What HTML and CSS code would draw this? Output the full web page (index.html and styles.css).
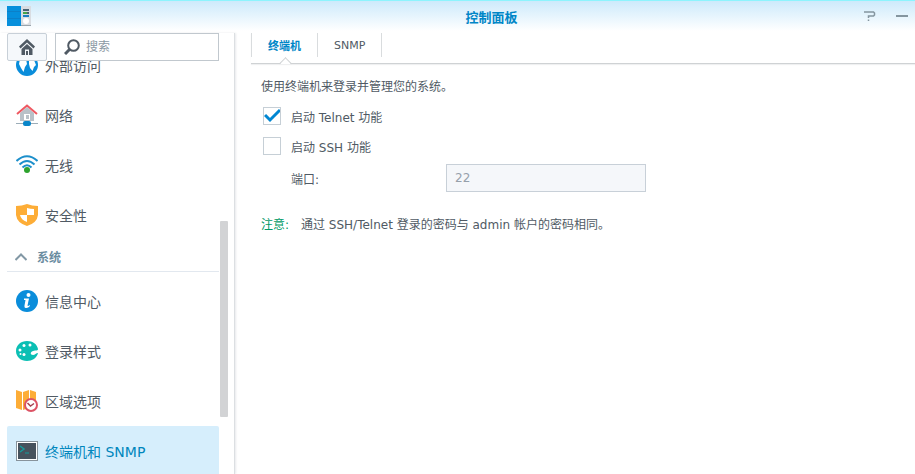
FILE: index.html
```
<!DOCTYPE html>
<html lang="zh-CN">
<head>
    <meta charset="UTF-8">
    <meta name="viewport" content="width=device-width, initial-scale=1.0">
    <title>控制面板</title>
    <link rel="stylesheet" href="styles.css">
</head>
<body>

    <!-- Title bar -->
    <header class="titlebar">
        <svg class="app-icon" width="24" height="20" viewBox="0 0 24 20" aria-hidden="true">
            <rect x="14" y="0" width="10" height="20" fill="#d9dde2"/>
            <rect x="14" y="19" width="10" height="1" fill="#9aa5ad"/>
            <rect x="0" y="0" width="14" height="20" fill="#058fdc"/>
            <path d="M0 5.500H14M0 12.500H14" stroke="#0b80c8"/>
            <rect x="16" y="3" width="6" height="2" fill="#4a6374"/>
            <rect x="16" y="6" width="4" height="2" fill="#47a447"/>
            <rect x="20" y="6" width="2" height="2" fill="#4a6374"/>
            <rect x="16" y="9" width="6" height="2" fill="#1e7ec2"/>
            <circle cx="19" cy="15" r="3" fill="#fff"/>
        </svg>
        <h1 class="title">控制面板</h1>
        <div class="window-buttons">
            <button class="window-btn" type="button" aria-label="帮助">
                <svg width="12" height="12" viewBox="0 0 12 12" fill="none" stroke="#84959f" stroke-width="1.500">
                    <path d="M0 2H9.500L10.500 3V5L9.500 6H4.500V8M4.500 9.500V11"/>
                </svg>
            </button>
            <button class="window-btn" type="button" aria-label="最小化">
                <svg width="12" height="12" viewBox="0 0 12 12"><rect x="0" y="5" width="12" height="2" fill="#84959f"/></svg>
            </button>
        </div>
    </header>

    <div class="window-body">
        <!-- Sidebar -->
        <aside class="sidebar">
            <div class="toolbar">
                <button class="home-btn" type="button" aria-label="主页">
                    <svg width="16" height="16" viewBox="0 0 16 16" fill="#505a64">
                        <path d="M8 0L0 7.500L1.500 9.500L8 3.500L14.500 9.500L16 7.500Z"/>
                        <path d="M2.500 10L8 5L13.500 10V16H10V10.500H6V16H2.500Z"/>
                        <rect x="7" y="12" width="2" height="4"/>
                    </svg>
                </button>
                <label class="search">
                    <svg width="16" height="16" viewBox="0 0 16 16" fill="none" stroke="#505a64">
                        <circle cx="9.500" cy="6.500" r="5.300" stroke-width="2"/>
                        <path d="M5.500 10.500L1 15" stroke-width="3"/>
                    </svg>
                    <input class="search-input" type="text" placeholder="搜索" aria-label="搜索">
                </label>
            </div>

            <nav class="menu-view">
                <div class="menu">
                    <a class="menu-item" href="#">
                        <svg width="22" height="22" viewBox="0 0 22 22">
                            <circle cx="11" cy="11" r="11" fill="#0a8ddb"/>
                            <path d="M4 5L10 5L11 10L9 13L7.500 18L5 14L3 10ZM13 6L18 6L20 11L18 13L16.500 17L14 14L13 10Z" fill="#fff"/>
                        </svg>
                        <span>外部访问</span>
                    </a>
                    <a class="menu-item" href="#">
                        <svg width="22" height="22" viewBox="0 0 22 22">
                            <path d="M4 9L11 3L18 9V17H4Z" fill="#b9c1c8"/>
                            <rect x="8" y="10" width="6" height="6" fill="#fff"/>
                            <rect x="10" y="11" width="3" height="4" fill="#b9c1c8"/>
                            <path d="M1 10L11 1.500L21 10" fill="none" stroke="#ef5861" stroke-width="2"/>
                            <path d="M0 19.500H22" stroke="#9cadb8"/>
                            <rect x="7" y="17" width="8" height="5" rx="2" fill="#0a86c9"/>
                        </svg>
                        <span>网络</span>
                    </a>
                    <a class="menu-item" href="#">
                        <svg width="22" height="22" viewBox="0 0 22 22" fill="none" stroke="#1c8fcb" stroke-width="2">
                            <path d="M0.500 7Q11 -2.500 21.500 7M3.500 10.500Q11 3.500 18.500 10.500M6.500 13.500Q11 9 15.500 13.500"/>
                            <circle cx="11" cy="16" r="3" fill="#2da32d" stroke="none"/>
                        </svg>
                        <span>无线</span>
                    </a>
                    <a class="menu-item" href="#">
                        <svg width="22" height="22" viewBox="0 0 22 22">
                            <path d="M0 2Q6 2 11 0Q16 2 22 2V11Q21 19 11 22Q1 19 0 11Z" fill="#fdad37"/>
                            <path d="M11 4Q14 5 18 5V11H11ZM4 11H11V18Q5 16 4 11Z" fill="#fff"/>
                        </svg>
                        <span>安全性</span>
                    </a>

                    <button class="menu-section" type="button">
                        <svg width="12" height="8" viewBox="0 0 12 8" fill="none" stroke="#8298a5" stroke-width="2"><path d="M0.500 7L6 1.500L11.500 7"/></svg>
                        <span>系统</span>
                    </button>

                    <a class="menu-item" href="#">
                        <svg width="22" height="22" viewBox="0 0 22 22">
                            <circle cx="11" cy="11" r="11" fill="#0a8ddb"/>
                            <circle cx="12.500" cy="5" r="2" fill="#fff"/>
                            <path d="M8 8.500H13L11.500 15.500Q12 16.500 13.500 15L14 16Q12 18.500 9.500 18Q8 17.500 8.500 15.500L9.500 10H8Z" fill="#fff"/>
                        </svg>
                        <span>信息中心</span>
                    </a>
                    <a class="menu-item" href="#">
                        <svg width="22" height="22" viewBox="0 0 22 22">
                            <path d="M11 1C17 1 21 4 22 9C22 11 20 10 17 11C14 12 14 15 17 15C19 15 20 13 22 13C21 18 16 21 11 21C5 21 0 17 0 11C0 5 5 1 11 1Z" fill="#0bbfb4"/>
                            <g fill="#fff">
                                <circle cx="4" cy="10" r="1.500"/>
                                <circle cx="8" cy="5.500" r="1.500"/>
                                <circle cx="14" cy="5" r="1.500"/>
                                <circle cx="8" cy="14.500" r="1.500"/>
                                <circle cx="4.500" cy="14" r="1"/>
                            </g>
                        </svg>
                        <span>登录样式</span>
                    </a>
                    <a class="menu-item" href="#">
                        <svg width="22" height="22" viewBox="0 0 22 22">
                            <path d="M0 0L6 2V20L0 18ZM7 2L13 0V18L7 20ZM14 0L20 2V20L14 18Z" fill="#fdad37"/>
                            <circle cx="15" cy="15" r="6" fill="#fff" stroke="#dc5365" stroke-width="2"/>
                            <path d="M11.500 13L14.500 16L18 13.500" fill="none" stroke="#a64250" stroke-width="1.500"/>
                        </svg>
                        <span>区域选项</span>
                    </a>
                    <a class="menu-item selected" href="#">
                        <svg width="22" height="22" viewBox="0 0 22 22">
                            <rect x="0.500" y="1.500" width="21" height="19" fill="#fff" stroke="#87939c"/>
                            <rect x="2" y="3" width="18" height="16" fill="#46525d"/>
                            <path d="M4 6L8 9L4 12" fill="none" stroke="#159b9c" stroke-width="1.500"/>
                            <path d="M9 13H13" stroke="#159b9c"/>
                        </svg>
                        <span>终端机和 SNMP</span>
                    </a>
                </div>
                <div class="scrollbar"></div>
            </nav>
        </aside>

        <!-- Content -->
        <main class="content">
            <div class="tabs">
                <button class="tab active" type="button">终端机</button>
                <button class="tab" type="button">SNMP</button>
            </div>

            <form class="panel">
                <p class="desc">使用终端机来登录并管理您的系统。</p>
                <label class="check-row">
                    <input class="checkbox" type="checkbox" checked>
                    <span>启动 Telnet 功能</span>
                </label>
                <label class="check-row">
                    <input class="checkbox" type="checkbox">
                    <span>启动 SSH 功能</span>
                </label>
                <div class="field-row">
                    <label class="field-label" for="port">端口:</label>
                    <input class="field-input" id="port" type="text" value="22" disabled>
                </div>
                <p class="note"><span class="note-label">注意:</span><span>通过 SSH/Telnet 登录的密码与 admin 帐户的密码相同。</span></p>
            </form>
        </main>
    </div>

</body>
</html>
```
FILE: styles.css
```
/* Basic resets and body styling */
* {
    box-sizing: border-box;
}

body {
    display: flex;
    flex-direction: column;
    height: 100vh;
    margin: 0;
    overflow: hidden;
    background-color: #fff;
    color: #505a64;
    font-family: "DejaVu Sans", "Noto Sans CJK SC", sans-serif;
    font-size: 12px;
}

button, input {
    font-family: inherit;
    font-size: inherit;
    color: inherit;
}

svg {
    display: block;
    flex: none;
}

/* Title bar */
.titlebar {
    display: grid;
    grid-template-columns: 1fr auto 1fr;
    align-items: center;
    flex: none;
    height: 33px;
    padding: 0 7px 2px;
    border-top: 1px solid #8df4fd;
    background: linear-gradient(#cdeafb, #fff 30px);
}

.title {
    margin: 0;
    padding-left: 68px;
    color: #0086c7;
    font-size: 13px;
    font-weight: bold;
}

.window-buttons {
    display: flex;
    justify-content: flex-end;
    gap: 20px;
}

.window-btn {
    padding: 0;
    border: none;
    background: none;
    cursor: pointer;
}

.window-body {
    display: flex;
    flex: 1;
    min-height: 0;
}

/* Sidebar */
.sidebar {
    display: flex;
    flex-direction: column;
    flex: none;
    width: 235px;
    border-right: 1px solid #dcdfe2;
    box-shadow: 1px 0 2px #e8eaec;
}

.toolbar {
    display: flex;
    flex: none;
    gap: 8px;
    padding: 0 15px 0 7px;
}

.home-btn {
    display: flex;
    align-items: center;
    justify-content: center;
    width: 40px;
    height: 28px;
    padding: 0;
    border: 1px solid #c8d0d8;
    border-radius: 2px;
    background-color: #f5f8fb;
    cursor: pointer;
}

.search {
    display: flex;
    align-items: center;
    flex: 1;
    gap: 6px;
    height: 28px;
    padding: 0 8px;
    border: 1px solid #c1c8ce;
}

.search-input {
    width: 100%;
    min-width: 0;
    padding: 0;
    border: none;
    outline: none;
    background: none;
}

.search-input::placeholder {
    color: #8b98a3;
}

.menu-view {
    position: relative;
    flex: 1;
    min-height: 0;
    overflow: hidden;
}

/* The list is scrolled down a little */
.menu {
    margin-top: -21px;
    padding: 0 15px 0 7px;
}

.menu-item {
    display: flex;
    align-items: center;
    gap: 7px;
    height: 50px;
    padding-left: 9px;
    border-radius: 2px;
    color: #505a64;
    font-size: 14px;
    text-decoration: none;
}

.menu-item.selected {
    background-color: #d6eefc;
    color: #0086bd;
}

.menu-section {
    display: flex;
    align-items: center;
    gap: 10px;
    width: 100%;
    height: 32px;
    margin-bottom: 4px;
    padding: 2px 8px 0;
    border: none;
    border-bottom: 1px solid #e2e8ef;
    background: none;
    color: #6a8c9f;
    font-weight: bold;
    cursor: pointer;
}

.scrollbar {
    position: absolute;
    top: 160px;
    right: 6px;
    width: 8px;
    height: 196px;
    border-radius: 1px;
    background-color: #d2d3d5;
}

/* Content */
.content {
    flex: 1;
    min-width: 0;
    padding-left: 16px;
}

.tabs {
    display: flex;
    height: 31px;
    padding-bottom: 6px;
    border-bottom: 1px solid #cfd2d4;
    box-shadow: 0 1px 1px #eff0f1;
}

.tab {
    position: relative;
    padding: 0 16px;
    border: none;
    border-right: 1px solid #d9dcde;
    background: none;
    font-size: 11px;
    cursor: pointer;
}

.tab:first-child {
    border-left: 1px solid #d9dcde;
}

.tab.active {
    color: #0086c7;
    font-weight: bold;
}

/* Notch under the active tab */
.tab.active::after {
    content: "";
    position: absolute;
    bottom: -11px;
    left: 50%;
    width: 8px;
    height: 8px;
    margin-left: -4px;
    border-top: 1px solid #cfd2d4;
    border-left: 1px solid #cfd2d4;
    background: linear-gradient(135deg, #fff 50%, transparent 50%);
    transform: rotate(45deg);
}

.panel {
    padding: 14px 10px;
}

.desc {
    margin: 0 0 5px;
    line-height: 18px;
}

.check-row {
    display: flex;
    align-items: center;
    gap: 10px;
    width: fit-content;
    height: 30px;
    padding-left: 2px;
}

.checkbox {
    appearance: none;
    width: 18px;
    height: 18px;
    margin: 0;
    border: 1px solid #c6cfd6;
    background-color: #fff;
}

.checkbox:checked {
    background: url("data:image/svg+xml,%3Csvg xmlns='http://www.w3.org/2000/svg' viewBox='0 0 18 18'%3E%3Cpath d='M2 8L7 13L17 3' fill='none' stroke='%230086d2' stroke-width='3'/%3E%3C/svg%3E") center / 18px no-repeat #fff;
}

.field-row {
    display: flex;
    align-items: center;
    margin-top: 3px;
    padding-left: 30px;
}

.field-label {
    width: 155px;
}

.field-input {
    width: 200px;
    height: 28px;
    padding: 0 8px;
    border: 1px solid #c8d0d8;
    background-color: #f5f7fa;
    color: #96a0aa;
}

.note {
    display: flex;
    gap: 12px;
    margin: 24px 0 0;
    line-height: 18px;
}

.note-label {
    color: #009966;
}
```
